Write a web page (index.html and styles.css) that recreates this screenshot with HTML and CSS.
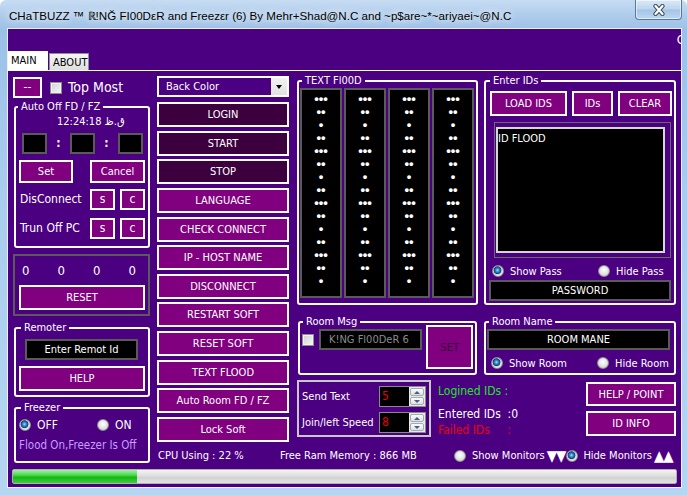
FILE: index.html
```html
<!DOCTYPE html>
<html>
<head>
<meta charset="utf-8">
<title>CHaTBUZZ</title>
<link rel="stylesheet" href="styles.css">
</head>
<body>
<div class="window">
  <div class="titlebar">
    <span class="title">CHaTBUZZ ™ ℝ!NĞ FI00DεR and Freezεr (6) By Mehr+Shad@N.C and ~p$are~*~ariyaei~@N.C</span>
    <div class="close"><svg width="14" height="12" viewBox="0 0 14 12"><path d="M3.5 2 L10.5 10 M10.5 2 L3.5 10" stroke="#3d4e63" stroke-width="4.2" stroke-linecap="round" fill="none"/><path d="M3.5 2 L10.5 10 M10.5 2 L3.5 10" stroke="#ffffff" stroke-width="2.2" stroke-linecap="round" fill="none"/></svg></div>
  </div>
  <div class="client">
    <div class="topband"><span class="clipc">C</span></div>
    <div class="tabs">
      <div class="tab active">MAIN</div>
      <div class="tab inactive">ABOUT</div>
    </div>
    <div class="page">
      <div class="main">
        <div class="col-left">
          <div class="toprow">
            <div class="btn sq">--</div>
            <span class="check"></span>
            <span class="topmost">Top Most</span>
          </div>
          <fieldset class="grp autooff">
            <legend>Auto Off FD / FZ</legend>
            <div class="clock">12:24:18 ق.ظ</div>
            <div class="timerow">
              <span class="tbox"></span><span class="colon">:</span><span class="tbox"></span><span class="colon">:</span><span class="tbox"></span>
            </div>
            <div class="setrow">
              <div class="btn set">Set</div>
              <div class="btn cancel">Cancel</div>
            </div>
            <div class="actrow first">
              <span class="lbl">DisConnect</span>
              <div class="btn mini">s</div>
              <div class="btn mini">c</div>
            </div>
            <div class="actrow second">
              <span class="lbl">Trun Off PC</span>
              <div class="btn mini">s</div>
              <div class="btn mini">c</div>
            </div>
          </fieldset>
          <div class="counts">
            <div class="nums"><span>0</span><span>0</span><span>0</span><span>0</span></div>
            <div class="btn reset">RESET</div>
          </div>
          <fieldset class="grp remoter">
            <legend>Remoter</legend>
            <div class="blackbox remot">Enter Remot Id</div>
            <div class="btn help">HELP</div>
          </fieldset>
          <fieldset class="grp freezer">
            <legend>Freezer</legend>
            <div class="fzradios">
              <span class="opt off"><span class="radio on"></span>OFF</span>
              <span class="opt"><span class="radio"></span>ON</span>
            </div>
            <div class="fzstatus">Flood On,Freezer Is Off</div>
          </fieldset>
        </div>

        <div class="col-rest">
          <div class="rest-top">
            <div class="col-mid">
              <div class="combo"><span class="combo-text">Back Color</span><span class="dd"><span class="tri"></span></span></div>
              <div class="btnlist">
                <div class="btn dark">LOGIN</div>
                <div class="btn dark">START</div>
                <div class="btn dark">STOP</div>
                <div class="btn">LANGUAGE</div>
                <div class="btn">CHECK CONNECT</div>
                <div class="btn">IP - HOST NAME</div>
                <div class="btn">DISCONNECT</div>
                <div class="btn">RESTART SOFT</div>
                <div class="btn">RESET SOFT</div>
                <div class="btn">TEXT FLOOD</div>
                <div class="btn">Auto Room FD / FZ</div>
                <div class="btn">Lock Soft</div>
              </div>
            </div>

            <div class="cr">
              <fieldset class="grp flood">
                <legend>TEXT Fl00D</legend>
                <div class="fcols">
                  <div class="fcol"><div>•••</div><div>••</div><div>•</div><div>••</div><div>•••</div><div>••</div><div>•</div><div>••</div><div>•••</div><div>••</div><div>•</div><div>••</div><div>•••</div><div>••</div><div>•</div></div>
                  <div class="fcol"><div>•••</div><div>••</div><div>•</div><div>••</div><div>•••</div><div>••</div><div>•</div><div>••</div><div>•••</div><div>••</div><div>•</div><div>••</div><div>•••</div><div>••</div><div>•</div></div>
                  <div class="fcol"><div>•••</div><div>••</div><div>•</div><div>••</div><div>•••</div><div>••</div><div>•</div><div>••</div><div>•••</div><div>••</div><div>•</div><div>••</div><div>•••</div><div>••</div><div>•</div></div>
                  <div class="fcol"><div>•••</div><div>••</div><div>•</div><div>••</div><div>•••</div><div>••</div><div>•</div><div>••</div><div>•••</div><div>••</div><div>•</div><div>••</div><div>•••</div><div>••</div><div>•</div></div>
                </div>
              </fieldset>

              <fieldset class="grp ids">
                <legend>Enter IDs</legend>
                <div class="idbtns">
                  <div class="btn load">LOAD IDS</div>
                  <div class="btn idsb">IDs</div>
                  <div class="btn clear">CLEAR</div>
                </div>
                <div class="listframe"><div class="list">ID FLOOD</div></div>
                <div class="radrow pass">
                  <span class="opt wide"><span class="radio on"></span>Show Pass</span>
                  <span class="opt"><span class="radio"></span>Hide Pass</span>
                </div>
                <div class="blackbox password">PASSWORD</div>
              </fieldset>

              <fieldset class="grp roommsg">
                <legend>Room Msg</legend>
                <div class="msgrow">
                  <span class="check small"></span>
                  <div class="blackbox msgbox">K!NG Fl00DeR 6</div>
                  <div class="btn setbig">SET</div>
                </div>
              </fieldset>

              <fieldset class="grp roomname">
                <legend>Room Name</legend>
                <div class="blackbox roombox">ROOM MANE</div>
                <div class="radrow room">
                  <span class="opt wide"><span class="radio on"></span>Show Room</span>
                  <span class="opt"><span class="radio"></span>Hide Room</span>
                </div>
              </fieldset>

              <div class="bottom">
                <div class="sendbox">
                  <div class="sendrow"><span>Send Text</span><div class="spin"><span class="val">5</span><span class="arrows"><i class="up"></i><i class="dn"></i></span></div></div>
                  <div class="sendrow"><span>Join/left Speed</span><div class="spin"><span class="val">8</span><span class="arrows"><i class="up"></i><i class="dn"></i></span></div></div>
                </div>
                <div class="stats">
                  <div class="logined">Logined IDs :</div>
                  <div class="entered">Entered IDs&nbsp; :0</div>
                  <div class="failed">Failed IDs&nbsp;&nbsp;&nbsp;&nbsp; :</div>
                </div>
                <div class="rbtns">
                  <div class="btn hp">HELP / POINT</div>
                  <div class="btn info">ID INFO</div>
                </div>
              </div>
            </div>
          </div>

          <div class="status">
            <span class="cpu">CPU Using : 22 %</span>
            <span class="ram">Free Ram Memory : 866 MB</span>
            <span class="mon"><span class="radio"></span><span class="montext">Show Monitors</span><span class="arr">▼▼</span></span>
            <span class="mon hide"><span class="radio on"></span><span class="montext">Hide Monitors</span><span class="arr">▲▲</span></span>
          </div>
        </div>
      </div>
      <div class="progress"><div class="fill" style="width:18.7%"></div></div>
    </div>
  </div>
</div>
</body>
</html>
```

FILE: styles.css
```css
* { box-sizing: border-box; }
html, body { margin: 0; padding: 0; }
body {
  width: 687px;
  height: 495px;
  overflow: hidden;
  background: #ffffff;
  font-family: "DejaVu Sans Condensed", "DejaVu Sans", sans-serif;
  font-stretch: semi-condensed;
}

.window {
  width: 687px;
  height: 495px;
  display: flex;
  flex-direction: column;
  background: linear-gradient(180deg, #c6dcf2 0px, #abc9ea 18px, #9cc1e8 30px, #a9cdee 200px, #b4d6f1 100%);
  border-radius: 6px 6px 0 0;
}

.titlebar {
  height: 29px;
  flex: none;
  display: flex;
  align-items: flex-start;
  padding-left: 9px;
}
.title {
  margin-top: 8px;
  font-family: "Liberation Sans", sans-serif;
  font-size: 11.6px;
  line-height: 15px;
  color: #000;
  white-space: nowrap;
  text-shadow: 0 0 6px #eef5fc, 0 0 10px rgba(255,255,255,0.8);
}
.close {
  margin-left: auto;
  margin-right: 5px;
  width: 47px;
  height: 20px;
  border: 1px solid #58789c;
  border-top: none;
  border-radius: 0 0 4px 4px;
  background: linear-gradient(180deg, #dbe9f7 0%, #bcd4ee 48%, #a5c4e6 52%, #bcd7f0 100%);
  box-shadow: inset 0 0 0 1px rgba(255,255,255,0.55);
  display: flex;
  align-items: center;
  justify-content: center;
}

.client {
  flex: 1;
  margin: 0 6px 8px 8px;
  background: #4b0082;
  display: flex;
  flex-direction: column;
  outline: 1px solid rgba(255,255,255,0.75);
  color: #fff;
  font-size: 11px;
  line-height: 13px;
  overflow: hidden;
}

.topband {
  height: 21px;
  flex: none;
  display: flex;
  justify-content: flex-end;
  align-items: center;
  overflow: hidden;
  font-size: 13px;
}
.clipc { margin-right: -4px; }

.tabs {
  height: 20px;
  flex: none;
  display: flex;
  align-items: flex-end;
}
.tab { font-size: 11px; line-height: 12px; color: #000; }
.tab.active {
  width: 40px;
  height: 19px;
  background: #fff;
  padding: 4px 0 0 3px;
}
.tab.inactive {
  width: 40px;
  height: 17px;
  margin-left: 1px;
  background: linear-gradient(180deg, #f6f6f6, #dedede);
  border: 1px solid #8a8d94;
  border-bottom: none;
  padding: 3px 0 0 3px;
}

.page {
  flex: 1;
  border-top: 1px solid #fff;
  padding: 0 5px;
  display: flex;
  flex-direction: column;
}

.main {
  display: flex;
  align-items: flex-start;
  gap: 7px;
}

/* generic controls */
.btn {
  display: flex;
  align-items: center;
  justify-content: center;
  background: #800080;
  border: 2px solid #fff;
  color: #fff;
  font-size: 11px;
  white-space: nowrap;
}
.btn.dark { background: #3d003f; }

.grp {
  margin: 0;
  padding: 0;
  min-width: 0;
  border: 2px solid #fff;
  border-radius: 3px;
}
.grp legend {
  font-size: 11px;
  line-height: 12px;
  padding: 0 3px;
  margin-left: 2px;
  color: #fff;
}

.blackbox {
  background: #000;
  border: 2px solid #5a5a5a;
  display: flex;
  align-items: center;
  justify-content: center;
  color: #fff;
  font-size: 11px;
}

.check {
  width: 12px;
  height: 12px;
  flex: none;
  border: 1px solid #8e8f8f;
  background: linear-gradient(135deg, #cfd1d3, #f7f7f7);
  box-shadow: inset 0 0 0 1px #f2f2f2;
}

.radio {
  width: 12px;
  height: 12px;
  flex: none;
  border-radius: 50%;
  border: 1px solid #8c8c8c;
  background: radial-gradient(circle at 50% 40%, #ffffff 0%, #e2e2e2 55%, #bcbcbc 100%);
}
.radio.on {
  background: radial-gradient(circle at 45% 42%, #a6dcf8 0px, #2b80c2 2px, #0d4378 3.6px, #cfd3d6 4.2px, #f3f3f3 6px);
}

.opt {
  display: flex;
  align-items: center;
  gap: 6px;
  font-size: 11px;
}

/* left column */
.col-left {
  width: 137px;
  flex: none;
  display: flex;
  flex-direction: column;
}
.toprow {
  margin-top: 6px;
  height: 21px;
  display: flex;
  align-items: center;
}
.btn.sq { width: 29px; height: 21px; font-size: 12px; }
.toprow .check { margin-left: 8px; }
.topmost { margin-left: 6px; font-size: 14px; }

.autooff { margin-top: 3px; margin-left: 1px; padding-bottom: 7px; }
.clock { margin-top: 2px; padding-left: 41px; font-size: 11px; line-height: 13px; }
.timerow { margin-top: 5px; height: 21px; display: flex; padding-left: 6px; }
.tbox { width: 25px; height: 21px; background: #000; border: 2px solid #5a5a5a; }
.colon { width: 23px; text-align: center; font-weight: bold; font-size: 12px; line-height: 21px; }
.setrow { margin-top: 6px; display: flex; justify-content: space-between; padding: 0 3px; }
.btn.set { width: 54px; height: 23px; }
.btn.cancel { width: 55px; height: 23px; }
.actrow { display: flex; align-items: center; height: 21px; padding: 0 3px 0 4px; gap: 5px; }
.actrow.first { margin-top: 6px; }
.actrow.second { margin-top: 8px; }
.actrow .lbl { flex: 1; font-size: 12px; }
.btn.mini { width: 25px; height: 21px; font-size: 12px; }

.counts {
  margin-top: 6px;
  height: 62px;
  border: 2px solid #5a5a5a;
  display: flex;
  flex-direction: column;
  padding: 7px 3px 0 4px;
}
.nums { display: flex; justify-content: space-between; padding: 0 9px 0 3px; font-size: 13px; line-height: 15px; }
.btn.reset { margin-top: 7px; height: 25px; }

.remoter { margin-top: 6px; margin-left: 1px; padding: 0 3px 4px 3px; }
.remot { margin: 5px 0 0 6px; width: 113px; height: 21px; }
.btn.help { margin-top: 6px; height: 25px; }

.freezer { margin-top: 5px; margin-left: 1px; padding: 0 0 9px 3px; }
.fzradios { margin-top: 5px; height: 12px; display: flex; }
.fzradios .opt { font-size: 12px; }
.fzradios .off { width: 78px; }
.fzstatus { margin-top: 7px; line-height: 14px; font-size: 11.5px; color: #c89cff; }

/* right part */
.col-rest { flex: 1; display: flex; flex-direction: column; }
.rest-top { display: flex; align-items: flex-start; }

.col-mid { width: 132px; flex: none; display: flex; flex-direction: column; }
.combo {
  margin-top: 5px;
  height: 21px;
  border: 2px solid #fff;
  background: #4b0082;
  display: flex;
  align-items: stretch;
}
.combo-text { flex: 1; padding-left: 7px; font-size: 11px; line-height: 17px; }
.dd {
  width: 16px;
  background: linear-gradient(180deg, #f2f2f2, #e2e2e2);
  display: flex;
  align-items: center;
  justify-content: center;
}
.tri {
  width: 0; height: 0;
  border-left: 3.5px solid transparent;
  border-right: 3.5px solid transparent;
  border-top: 4px solid #000;
}
.btnlist { margin-top: 5px; display: flex; flex-direction: column; gap: 3.64px; }
.btnlist .btn { height: 25px; }

.cr {
  margin-left: 8px;
  flex: 1;
  display: grid;
  grid-template-columns: 181px 192px;
  column-gap: 6px;
  row-gap: 11px;
  margin-top: 4px;
}

.flood { padding: 1px 2px 5px 1px; }
.fcols { display: flex; gap: 2px; }
.fcol {
  width: 42px;
  height: 210px;
  background: #000;
  border: 2px solid #5a5a5a;
  padding-top: 2px;
  font-family: "Liberation Sans", sans-serif;
  font-weight: bold;
  font-size: 13px;
  line-height: 13px;
  text-align: center;
  color: #fff;
}

.ids { padding: 0 2px 2px 2px; }
.idbtns { margin-top: 4px; display: flex; gap: 5px; padding-left: 2px; }
.idbtns .btn { height: 25px; }
.btn.load { width: 77px; }
.btn.idsb { width: 41px; }
.btn.clear { width: 54px; }
.listframe {
  margin: 6px 0 0 6px;
  width: 177px;
  height: 136px;
  border: 1px solid #6a6a6a;
  padding: 4px 5px 4px 1px;
}
.list {
  height: 100%;
  background: #000;
  border: 2px solid #d6d6d6;
  padding: 3px 0 0 0;
  font-size: 11px;
}
.radrow { display: flex; height: 12px; }
.radrow .wide { width: 106px; }
.radrow.pass { margin-top: 7px; padding-left: 4px; }
.password { margin: 3px 0 0 1px; width: 182px; height: 21px; }

.roommsg { margin: 0 1px; padding: 0 2px 4px 1px; }
.msgrow { display: flex; align-items: flex-start; }
.check.small { margin: 6px 0 0 1px; }
.msgbox { margin: 1px 0 0 5px; width: 104px; height: 21px; color: #8c8c8c; justify-content: flex-start; padding-left: 8px; }
.btn.setbig { margin: -3px 0 0 4px; width: 47px; height: 44px; color: #3a003a; }

.roomname { padding: 0 3px 4px 1px; }
.roombox { margin-top: 1px; width: 183px; height: 21px; }
.radrow.room { margin-top: 7px; padding-left: 4px; }

.bottom {
  grid-column: 1 / 3;
  margin-top: -6px;
  display: flex;
  align-items: flex-start;
}
.sendbox {
  width: 134px;
  height: 57px;
  border: 2px solid #c8c8c8;
  padding: 4px 3px 0 3px;
  display: flex;
  flex-direction: column;
  gap: 5px;
}
.sendrow { display: flex; align-items: center; height: 21px; font-size: 11px; }
.spin {
  margin-left: auto;
  width: 47px;
  height: 21px;
  background: #000;
  border: 1px solid #8a8a8a;
  display: flex;
}
.val { flex: 1; color: #e60000; font-size: 12px; line-height: 18px; padding-left: 2px; }
.arrows { width: 16px; display: flex; flex-direction: column; gap: 1px; padding: 1px; background: #e8e8e8; }
.arrows i {
  flex: 1;
  border: 1px solid #a4a9b2;
  border-radius: 2px;
  background: linear-gradient(180deg, #fbfbfb, #dde1e6);
  display: flex;
  align-items: center;
  justify-content: center;
}
.arrows i::after {
  content: "";
  width: 0; height: 0;
  border-left: 3px solid transparent;
  border-right: 3px solid transparent;
}
.arrows .up::after { border-bottom: 3px solid #4a5d80; }
.arrows .dn::after { border-top: 3px solid #4a5d80; }

.stats { margin-left: 7px; font-size: 12px; line-height: 14px; }
.stats div { white-space: pre; }
.logined { margin-top: 4px; color: #1ee61e; }
.entered { margin-top: 9px; color: #fff; }
.failed { margin-top: 2px; color: #ee0000; }

.rbtns { margin-left: auto; display: flex; flex-direction: column; width: 90px; }
.btn.hp { margin-top: 2px; height: 24px; }
.btn.info { margin-top: 5px; height: 25px; }

.status {
  margin-top: 7px;
  display: flex;
  align-items: center;
  height: 14px;
  font-size: 11px;
  line-height: 14px;
  white-space: nowrap;
}
.cpu { width: 123px; padding-left: 1px; flex: none; }
.ram { width: 174px; flex: none; }
.mon { display: flex; align-items: center; }
.mon .montext { margin-left: 6px; }
.mon .arr { margin-left: 2px; font-size: 15px; line-height: 14px; letter-spacing: -1px; }
.mon.hide { margin-left: 1px; }
.mon.hide .montext { margin-left: 5px; }

.progress {
  margin: 6px -1px 0 -1px;
  height: 15px;
  flex: none;
  border: 1px solid #b0b0b0;
  border-radius: 2px;
  background: linear-gradient(180deg, #f3f3f3 0%, #dcdcdc 50%, #cfcfcf 51%, #e4e4e4 100%);
}
.fill {
  height: 100%;
  background: linear-gradient(180deg, #a6f0a6 0%, #4cd84c 40%, #12b812 55%, #3ccf3c 100%);
}
```
